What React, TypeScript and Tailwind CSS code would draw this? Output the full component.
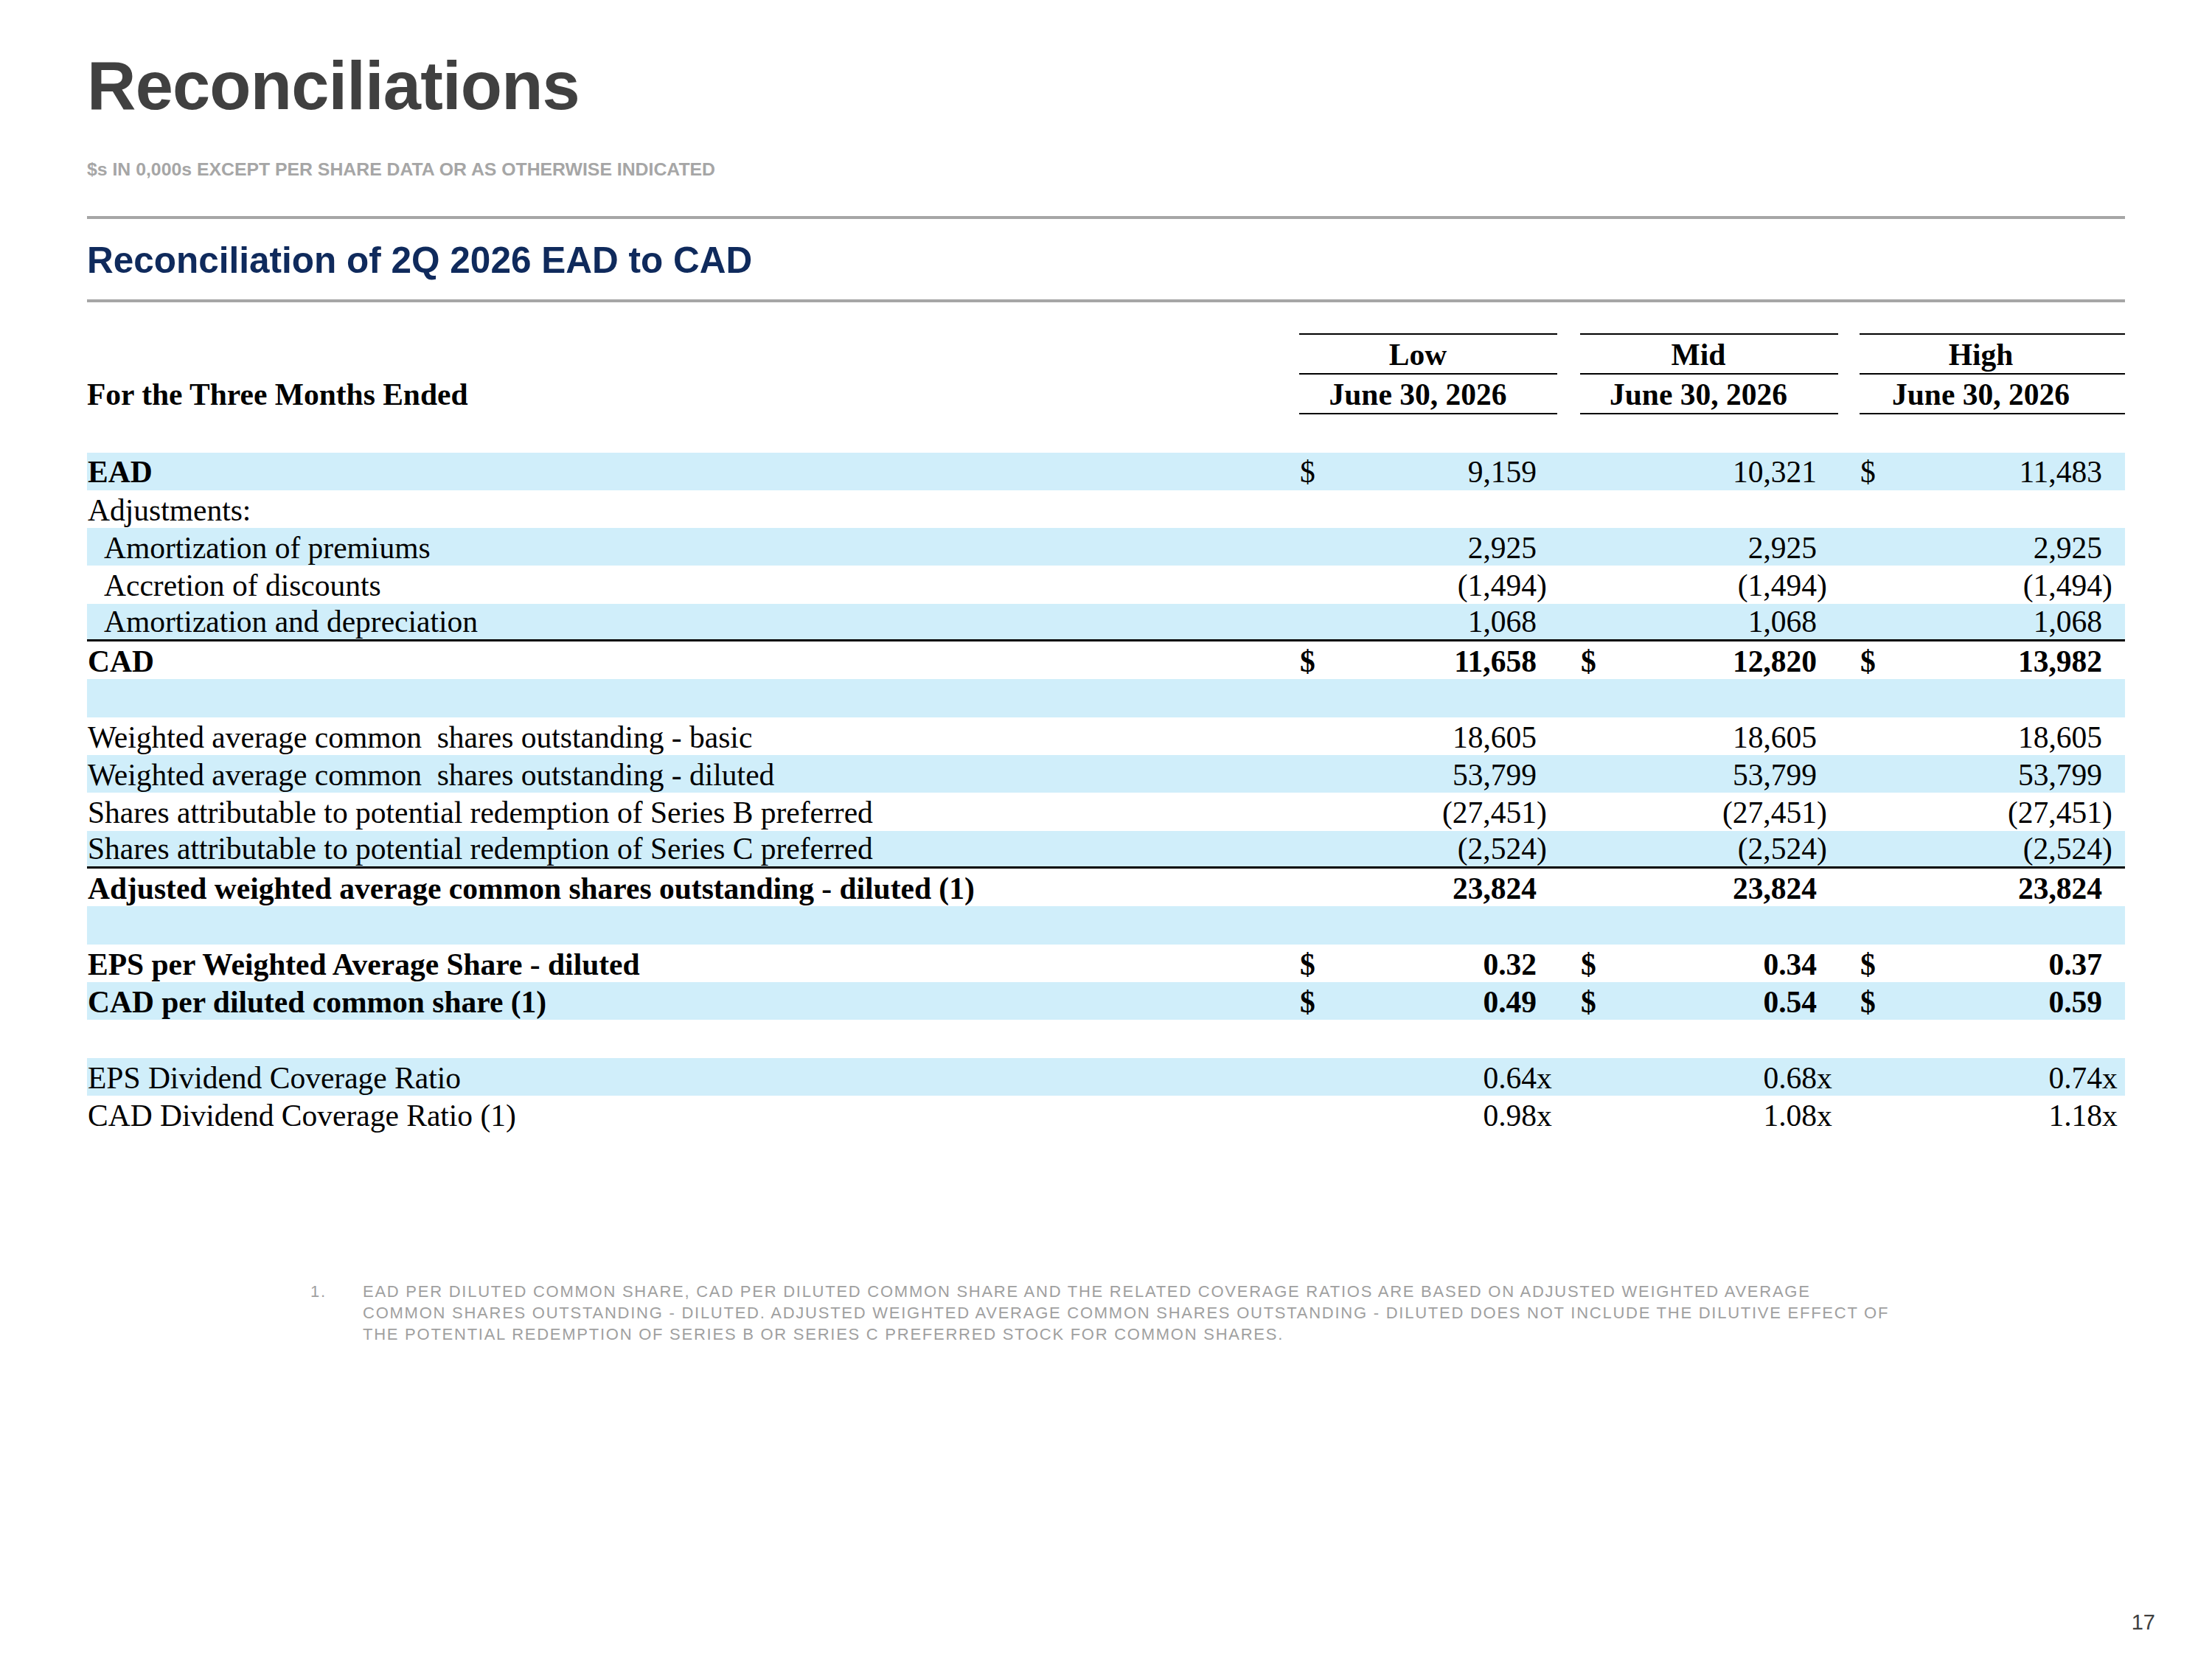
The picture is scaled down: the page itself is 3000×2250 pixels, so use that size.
import React from "react";

type Val = { d?: boolean; v: string };
type Row = {
  label?: string;
  indent?: boolean;
  labelBold?: boolean;
  valBold?: boolean;
  blue?: boolean;
  line?: boolean;
  vals?: Val[];
};

const rows: Row[] = [
  { label: "EAD", labelBold: true, blue: true, vals: [{ d: true, v: "9,159" }, { v: "10,321" }, { d: true, v: "11,483" }] },
  { label: "Adjustments:" },
  { label: "Amortization of premiums", indent: true, blue: true, vals: [{ v: "2,925" }, { v: "2,925" }, { v: "2,925" }] },
  { label: "Accretion of discounts", indent: true, vals: [{ v: "(1,494)" }, { v: "(1,494)" }, { v: "(1,494)" }] },
  { label: "Amortization and depreciation", indent: true, blue: true, line: true, vals: [{ v: "1,068" }, { v: "1,068" }, { v: "1,068" }] },
  { label: "CAD", labelBold: true, valBold: true, vals: [{ d: true, v: "11,658" }, { d: true, v: "12,820" }, { d: true, v: "13,982" }] },
  { blue: true },
  { label: "Weighted average common  shares outstanding - basic", vals: [{ v: "18,605" }, { v: "18,605" }, { v: "18,605" }] },
  { label: "Weighted average common  shares outstanding - diluted", blue: true, vals: [{ v: "53,799" }, { v: "53,799" }, { v: "53,799" }] },
  { label: "Shares attributable to potential redemption of Series B preferred", vals: [{ v: "(27,451)" }, { v: "(27,451)" }, { v: "(27,451)" }] },
  { label: "Shares attributable to potential redemption of Series C preferred", blue: true, line: true, vals: [{ v: "(2,524)" }, { v: "(2,524)" }, { v: "(2,524)" }] },
  { label: "Adjusted weighted average common shares outstanding - diluted (1)", labelBold: true, valBold: true, vals: [{ v: "23,824" }, { v: "23,824" }, { v: "23,824" }] },
  { blue: true },
  { label: "EPS per Weighted Average Share - diluted", labelBold: true, valBold: true, vals: [{ d: true, v: "0.32" }, { d: true, v: "0.34" }, { d: true, v: "0.37" }] },
  { label: "CAD per diluted common share (1)", labelBold: true, valBold: true, blue: true, vals: [{ d: true, v: "0.49" }, { d: true, v: "0.54" }, { d: true, v: "0.59" }] },
  {},
  { label: "EPS Dividend Coverage Ratio", blue: true, vals: [{ v: "0.64x" }, { v: "0.68x" }, { v: "0.74x" }] },
  { label: "CAD Dividend Coverage Ratio (1)", vals: [{ v: "0.98x" }, { v: "1.08x" }, { v: "1.18x" }] },
];

const groupW = ["w-[350px]", "w-[350px]", "w-[360px]"];
const sufW = ["w-[28px]", "w-[29px]", "w-[31px]"];
const padR = ["pr-[28px]", "pr-[29px]", "pr-[31px]"];
const gapW = ["w-[31px]", "w-[29px]", ""];

function split(v: string): [string, string] {
  if (v.endsWith(")")) return [v.slice(0, -1), ")"];
  if (v.endsWith("x")) return [v.slice(0, -1), "x"];
  return [v, ""];
}

function Group({ i, val, bold }: { i: number; val?: Val; bold?: boolean }) {
  const [num, suf] = val ? split(val.v) : ["", ""];
  return (
    <>
      <div className={`${groupW[i]} flex items-end pb-[3px] leading-none ${bold ? "font-bold" : ""}`}>
        <span className="w-[40px] pl-[1px]">{val?.d ? "$" : ""}</span>
        <span className="flex-1 text-right">{num}</span>
        <span className={`${sufW[i]} text-left`}>{suf}</span>
      </div>
      {gapW[i] && <div className={gapW[i]} />}
    </>
  );
}

function HeaderGroup({ i, text }: { i: number; text: string }) {
  return (
    <>
      <div className={`${groupW[i]} flex flex-col font-bold leading-none`}>
        <div className="h-[2px] bg-black" />
        <div className={`h-[52px] flex items-end justify-center pb-[3px] ${padR[i]}`}>{text}</div>
        <div className="h-[2px] bg-black" />
        <div className={`h-[52px] flex items-end justify-center pb-[3px] ${padR[i]}`}>June 30, 2026</div>
        <div className="h-[2px] bg-black" />
      </div>
      {gapW[i] && <div className={gapW[i]} />}
    </>
  );
}

export default function App() {
  return (
    <div className="w-[3000px] h-[2250px] bg-white flex flex-col font-['Liberation_Sans',Arial,sans-serif]">
      <div className="pl-[118px] pr-[118px]">
        <h1 className="mt-[70px] text-[92px] leading-[92px] font-bold text-[#404040] tracking-[-0.8px]">Reconciliations</h1>
        <div className="mt-[56px] text-[24.8px] leading-[24.5px] font-bold text-[#a6a6a6]">
          $s IN 0,000s EXCEPT PER SHARE DATA OR AS OTHERWISE INDICATED
        </div>
        <div className="mt-[50px] h-[4px] bg-[#a6a6a6]" />
        <h2 className="mt-[31px] text-[49.5px] leading-[50px] font-bold text-[#0f2a5c]">
          Reconciliation of 2Q 2026 EAD to CAD
        </h2>
        <div className="mt-[28px] h-[4px] bg-[#a6a6a6]" />

        <div className="mt-[42px] w-[2764px] font-['Liberation_Serif','Times_New_Roman',serif] text-[41.5px] text-black">
          <div className="flex">
            <div className="w-[1644px] flex flex-col justify-end">
              <div className="h-[54px] flex items-end pb-[5px] leading-none font-bold">For the Three Months Ended</div>
            </div>
            <HeaderGroup i={0} text="Low" />
            <HeaderGroup i={1} text="Mid" />
            <HeaderGroup i={2} text="High" />
          </div>

          <div className="mt-[52px]">
            {rows.map((r, idx) => (
              <div
                key={idx}
                className={`flex h-[51.33px] ${r.blue ? "bg-[#d0eefa]" : ""} ${r.line ? "border-b-[3px] border-black" : ""}`}
              >
                <div
                  className={`w-[1644px] flex items-end pb-[3px] leading-none whitespace-pre ${r.indent ? "pl-[23px]" : "pl-[1px]"} ${r.labelBold ? "font-bold" : ""}`}
                >
                  {r.label ?? ""}
                </div>
                {r.vals ? (
                  r.vals.map((v, i) => <Group key={i} i={i} val={v} bold={r.valBold} />)
                ) : (
                  <div className="flex-1" />
                )}
              </div>
            ))}
          </div>
        </div>

        <div className="mt-[201px] flex text-[22px] leading-[28.7px] text-[#a0a0a0] tracking-[1.75px] ml-[303px]">
          <div className="w-[71px]">1.</div>
          <div className="whitespace-nowrap">
            <div>EAD PER DILUTED COMMON SHARE, CAD PER DILUTED COMMON SHARE AND THE RELATED COVERAGE RATIOS ARE BASED ON ADJUSTED WEIGHTED AVERAGE</div>
            <div>COMMON SHARES OUTSTANDING - DILUTED. ADJUSTED WEIGHTED AVERAGE COMMON SHARES OUTSTANDING - DILUTED DOES NOT INCLUDE THE DILUTIVE EFFECT OF</div>
            <div>THE POTENTIAL REDEMPTION OF SERIES B OR SERIES C PREFERRED STOCK FOR COMMON SHARES.</div>
          </div>
        </div>
      </div>
      <div className="mt-auto mb-[36px] pr-[77px] flex justify-end text-[29px] leading-[28px] text-[#404040]">17</div>
    </div>
  );
}
